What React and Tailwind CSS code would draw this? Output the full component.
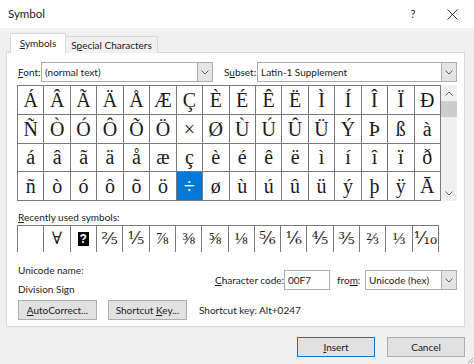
const ROWS = [
  ["Á", "Â", "Ã", "Ä", "Å", "Æ", "Ç", "È", "É", "Ê", "Ë", "Ì", "Í", "Î", "Ï", "Ð"],
  ["Ñ", "Ò", "Ó", "Ô", "Õ", "Ö", "×", "Ø", "Ù", "Ú", "Û", "Ü", "Ý", "Þ", "ß", "à"],
  ["á", "â", "ã", "ä", "å", "æ", "ç", "è", "é", "ê", "ë", "ì", "í", "î", "ï", "ð"],
  ["ñ", "ò", "ó", "ô", "õ", "ö", "÷", "ø", "ù", "ú", "û", "ü", "ý", "þ", "ÿ", "Ā"],
];

const RECENT = ["", "∀", "?", "⅖", "⅕", "⅞", "⅜", "⅝", "⅛", "⅚", "⅙", "⅘", "⅗", "⅔", "⅓", "⅒"];

const serif = "font-['Liberation_Serif','DejaVu_Serif','DejaVu_Sans',serif]";

function Chevron({ up = false }) {
  return (
    <svg width="8" height="5" viewBox="0 0 8 5" className="block">
      <path
        d={up ? "M0.5 4.5 L4 1 L7.5 4.5" : "M0.5 0.5 L4 4 L7.5 0.5"}
        fill="none"
        stroke="#606060"
        strokeWidth="1"
      />
    </svg>
  );
}

function Select({ value, width }) {
  return (
    <div className={`flex h-[20px] shrink-0 border border-[#adadad] bg-white ${width}`}>
      <span className="flex-1 truncate pl-[3px] leading-[18px]">{value}</span>
      <span className="flex w-[15px] items-center justify-center border-l border-[#adadad] bg-[#e5e5e5]">
        <Chevron />
      </span>
    </div>
  );
}

function Button({ children, primary = false, width = "w-[79px]" }) {
  return (
    <button
      className={`h-[20px] ${width} shrink-0 border bg-[#e1e1e1] text-center leading-[18px] whitespace-nowrap ${
        primary ? "border-[#0078d7]" : "border-[#adadad]"
      }`}
    >
      {children}
    </button>
  );
}

export default function App() {
  return (
    <div className="relative h-[364px] w-[474px] overflow-hidden whitespace-nowrap bg-[#f0f0f0] font-['Lato','Noto_Sans',sans-serif] text-[10px] text-[#1a1a1a]">
      {/* Title bar */}
      <div className="flex h-[28px] items-center bg-white pl-[8px]">
        <span className="flex-1 text-[11.5px]">Symbol</span>
        <span className="mr-[27px] w-[14px] text-center text-[11px]">?</span>
        <svg width="11" height="11" viewBox="0 0 11 11" className="mr-[16px]">
          <path d="M0.5 0.5 L10.5 10.5 M10.5 0.5 L0.5 10.5" stroke="#333" strokeWidth="1" />
        </svg>
      </div>

      {/* Tabs */}
      <div className="ml-[10px] mt-[5px] flex h-[20px] items-end">
        <div className="relative z-10 flex h-[20px] w-[56px] items-center justify-center border border-b-0 border-[#d9d9d9] bg-white">
          <span>
            <u>S</u>ymbols
          </span>
        </div>
        <div className="flex h-[17px] w-[92px] items-center justify-center border border-b-0 border-l-0 border-[#d9d9d9] bg-[#f0f0f0]">
          <span>
            S<u>p</u>ecial Characters
          </span>
        </div>
      </div>

      {/* Panel */}
      <div className="-mt-px ml-[6px] h-[275px] w-[459px] border border-[#d9d9d9] bg-white pl-[10px]">
        {/* Font / Subset */}
        <div className="mt-[9px] flex items-center">
          <span className="w-[24px] pl-px">
            <u>F</u>ont:
          </span>
          <Select value="(normal text)" width="w-[172px]" />
          <span className="w-[44px] pl-[11px]">
            S<u>u</u>bset:
          </span>
          <Select value="Latin-1 Supplement" width="w-[200px]" />
        </div>

        {/* Character grid */}
        <div className="mt-[3px] flex">
          <div className="grid h-[116px] w-[424px] grid-cols-16 grid-rows-4 gap-px bg-[#7a7a7a] p-px">
            {ROWS.flat().map((ch, i) => {
              const sel = ch === "÷";
              return (
                <div
                  key={i}
                  className={`flex items-center justify-center ${serif} text-[20px] ${
                    sel ? "bg-[#0078d7] text-white" : "bg-white text-[#1a1a1a]"
                  }`}
                >
                  {ch}
                </div>
              );
            })}
          </div>
          <div className="flex h-[116px] w-[16px] flex-col bg-[#f0f0f0]">
            <div className="flex h-[16px] items-center justify-center">
              <Chevron up />
            </div>
            <div className="mx-auto h-[16px] w-[16px] bg-[#cdcdcd]" />
            <div className="flex-1" />
            <div className="flex h-[16px] items-center justify-center">
              <Chevron />
            </div>
          </div>
        </div>

        {/* Recently used */}
        <div className="mt-[8px] h-[16px] pl-px leading-[16px]">
          <u>R</u>ecently used symbols:
        </div>
        <div className="grid h-[27px] w-[422px] grid-cols-16 gap-px bg-[#7a7a7a] p-px">
          {RECENT.map((ch, i) => (
            <div key={i} className={`flex items-center justify-center bg-white ${serif} text-[17px]`}>
              {ch === "?" ? (
                <span className="flex h-[14px] w-[11px] items-center justify-center bg-black font-['Liberation_Sans',sans-serif] text-[12px] font-bold text-white">
                  ?
                </span>
              ) : (
                ch
              )}
            </div>
          ))}
        </div>

        {/* Unicode info */}
        <div className="mt-[10px] flex">
          <div className="w-[198px] pl-px">
            <div className="h-[16px] leading-[16px]">Unicode name:</div>
            <div className="mt-[3px] h-[16px] leading-[16px]">Division Sign</div>
          </div>
          <div className="mt-[8px] flex h-[20px] items-center">
            <span className="w-[69px]">
              <u>C</u>haracter code:
            </span>
            <div className="h-[20px] w-[46px] border border-[#adadad] bg-white pl-[3px] leading-[18px]">00F7</div>
            <span className="w-[35px] pl-[7px]">
              fro<u>m</u>:
            </span>
            <Select value="Unicode (hex)" width="w-[92px]" />
          </div>
        </div>

        {/* Buttons row */}
        <div className="mt-[3px] flex items-center pl-px">
          <Button>
            <u>A</u>utoCorrect...
          </Button>
          <div className="ml-[11px]">
            <Button>
              Shortcut <u>K</u>ey...
            </Button>
          </div>
          <span className="ml-[12px]">Shortcut key: Alt+0247</span>
        </div>
      </div>

      {/* Dialog buttons */}
      <div className="mt-[10px] flex justify-end pr-[9px]">
        <Button primary width="w-[78px]">
          <u>I</u>nsert
        </Button>
        <div className="ml-[12px]">
          <Button width="w-[78px]">Cancel</Button>
        </div>
      </div>

      {/* Resize grip */}
      <svg width="8" height="8" viewBox="0 0 8 8" className="absolute bottom-0 right-0">
        <path d="M7 2 L2 7 M7 5 L5 7" stroke="#a0a0a0" strokeWidth="1" />
      </svg>
    </div>
  );
}
